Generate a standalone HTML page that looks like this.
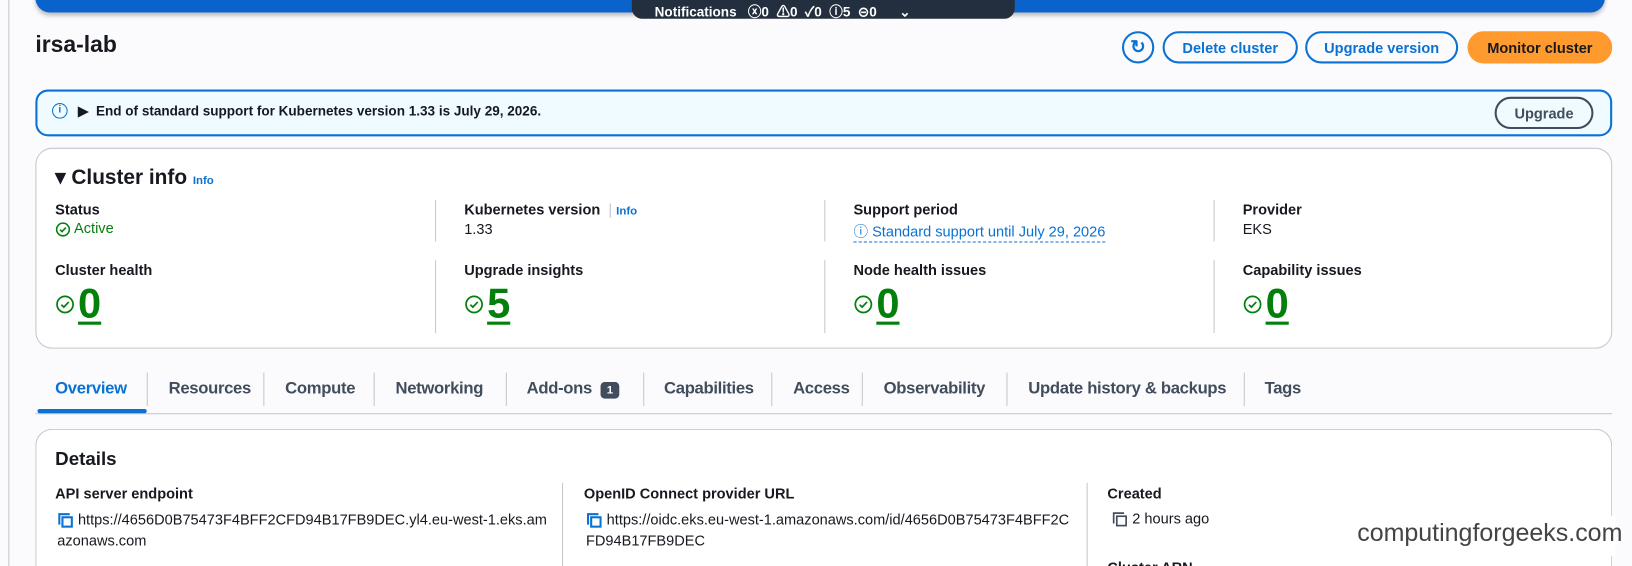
<!DOCTYPE html>
<html><head><style>
*{box-sizing:border-box;margin:0;padding:0}
html,body{width:1632px;height:566px;overflow:hidden;background:#fbfbfd}
body{font-family:"Liberation Sans",sans-serif;color:#16191f;font-size:14px;position:relative}
#w{position:absolute;left:0;top:0;width:1568px;height:544px;overflow:hidden;transform:scale(1.0408);transform-origin:0 0}
.a{position:absolute}
.b{font-weight:bold}
.btn{position:absolute;top:30px;height:31px;border:2px solid #0972d3;border-radius:16px;color:#0972d3;font-weight:bold;font-size:14px;display:flex;align-items:center;justify-content:center}
.lbl{position:absolute;font-weight:bold;font-size:14px}
.val{position:absolute;font-size:14px}
.vd{position:absolute;width:1px;background:#c6c6cd}
.tab{position:absolute;top:365px;font-size:16px;font-weight:bold;color:#414d5c;letter-spacing:-0.3px}
.tsep{position:absolute;top:358px;width:1px;height:32px;background:#c6c6cd}
.big{position:absolute;font-size:40px;font-weight:bold;color:#037f0c;text-decoration:underline;text-underline-offset:4px;text-decoration-thickness:3px}
svg{display:inline-block;vertical-align:middle}
</style></head><body><div id="w">
<div class="a" style="left:8px;top:0;width:1px;height:544px;background:#c6c6cd"></div>
<div class="a" style="left:34px;top:-10px;width:1508px;height:22px;background:#0a62cc;border-radius:0 0 14px 14px;box-shadow:0 3px 4px rgba(0,0,0,.25)"></div>
<div class="a" style="left:607px;top:-8px;width:368px;height:26px;background:#232f3e;border-radius:0 0 10px 10px;color:#fff;font-size:13px;font-weight:bold;padding:0 0 0 22px;line-height:18px;display:flex;align-items:flex-end"><span style="position:relative;top:3px">Notifications &nbsp; ⓧ0 &nbsp;⚠0 &nbsp;✓0 &nbsp;ⓘ5 &nbsp;⊝0 &nbsp;&nbsp;&nbsp;&nbsp; ⌄</span></div>
<div class="a b" style="left:34px;top:30px;font-size:22px">irsa-lab</div>
<div class="btn" style="left:1078px;width:31px;font-size:18px">↻</div>
<div class="btn" style="left:1117px;width:130px">Delete cluster</div>
<div class="btn" style="left:1254px;width:147px">Upgrade version</div>
<div class="btn" style="left:1410px;width:139px;background:#ff9a2e;border-color:#ff9a2e;color:#16191f">Monitor cluster</div>
<div class="a" style="left:34px;top:86px;width:1515px;height:45px;background:#f0fbff;border:2px solid #0972d3;border-radius:12px"></div>
<div class="a" style="left:50px;top:99px;width:15px;height:15px;border:1.5px solid #0972d3;border-radius:50%;color:#0972d3;font-size:10px;font-weight:bold;text-align:center;line-height:12px">i</div>
<div class="a b" style="left:75px;top:99px;font-size:13px;color:#16191f">▶ &nbsp;End of standard support for Kubernetes version 1.33 is July 29, 2026.</div>
<div class="a b" style="left:1436px;top:93px;width:95px;height:31px;border:2px solid #414d5c;border-radius:16px;color:#414d5c;display:flex;align-items:center;justify-content:center">Upgrade</div>
<div class="a" style="left:34px;top:142px;width:1515px;height:193px;background:#fff;border:1px solid #c6c6cd;border-radius:16px"></div>
<div class="a b" style="left:53px;top:158px;font-size:20px">▾ Cluster info <span style="font-size:11px;color:#0972d3">Info</span></div>
<div class="vd" style="left:418px;top:192px;height:40px"></div><div class="vd" style="left:792px;top:192px;height:40px"></div><div class="vd" style="left:1166px;top:192px;height:40px"></div>
<div class="vd" style="left:418px;top:250px;height:70px"></div><div class="vd" style="left:792px;top:250px;height:70px"></div><div class="vd" style="left:1166px;top:250px;height:70px"></div>
<div class="lbl" style="left:53px;top:193px">Status</div>
<div class="val" style="left:53px;top:211px;color:#037f0c"><svg width="15" height="15" viewBox="0 0 16 16"><circle cx="8" cy="8" r="6.5" fill="none" stroke="#037f0c" stroke-width="1.6"/><path d="M5 8.2l2 2 4-4.2" fill="none" stroke="#037f0c" stroke-width="1.6"/></svg> Active</div>
<div class="lbl" style="left:446px;top:193px">Kubernetes version <span style="color:#c6c6cd;font-weight:normal">&nbsp;|&nbsp;</span><span style="font-size:11px;color:#0972d3">Info</span></div>
<div class="val" style="left:446px;top:212px">1.33</div>
<div class="lbl" style="left:820px;top:193px">Support period</div>
<div class="val" style="left:820px;top:212px;color:#0972d3;border-bottom:1px dashed #0972d3">ⓘ Standard support until July 29, 2026</div>
<div class="lbl" style="left:1194px;top:193px">Provider</div>
<div class="val" style="left:1194px;top:212px">EKS</div>
<div class="lbl" style="left:53px;top:251px">Cluster health</div>
<div class="lbl" style="left:446px;top:251px">Upgrade insights</div>
<div class="lbl" style="left:820px;top:251px">Node health issues</div>
<div class="lbl" style="left:1194px;top:251px">Capability issues</div>
<div class="a" style="left:53px;top:283px"><svg width="19" height="19" viewBox="0 0 16 16"><circle cx="8" cy="8" r="6.5" fill="none" stroke="#037f0c" stroke-width="1.4"/><path d="M5 8.2l2 2 4-4.2" fill="none" stroke="#037f0c" stroke-width="1.4"/></svg></div><div class="big" style="left:75px;top:270px">0</div>
<div class="a" style="left:446px;top:283px"><svg width="19" height="19" viewBox="0 0 16 16"><circle cx="8" cy="8" r="6.5" fill="none" stroke="#037f0c" stroke-width="1.4"/><path d="M5 8.2l2 2 4-4.2" fill="none" stroke="#037f0c" stroke-width="1.4"/></svg></div><div class="big" style="left:468px;top:270px">5</div>
<div class="a" style="left:820px;top:283px"><svg width="19" height="19" viewBox="0 0 16 16"><circle cx="8" cy="8" r="6.5" fill="none" stroke="#037f0c" stroke-width="1.4"/><path d="M5 8.2l2 2 4-4.2" fill="none" stroke="#037f0c" stroke-width="1.4"/></svg></div><div class="big" style="left:842px;top:270px">0</div>
<div class="a" style="left:1194px;top:283px"><svg width="19" height="19" viewBox="0 0 16 16"><circle cx="8" cy="8" r="6.5" fill="none" stroke="#037f0c" stroke-width="1.4"/><path d="M5 8.2l2 2 4-4.2" fill="none" stroke="#037f0c" stroke-width="1.4"/></svg></div><div class="big" style="left:1216px;top:270px">0</div>
<div class="tab" style="left:53px;color:#0972d3">Overview</div>
<div class="tsep" style="left:141px"></div><div class="tab" style="left:162px">Resources</div>
<div class="tsep" style="left:253px"></div><div class="tab" style="left:274px">Compute</div>
<div class="tsep" style="left:359px"></div><div class="tab" style="left:380px">Networking</div>
<div class="tsep" style="left:486px"></div><div class="tab" style="left:506px">Add-ons <span style="display:inline-block;background:#414d5c;color:#fff;font-size:11px;padding:2px 6px;border-radius:4px;margin-left:4px">1</span></div>
<div class="tsep" style="left:618px"></div><div class="tab" style="left:638px">Capabilities</div>
<div class="tsep" style="left:741px"></div><div class="tab" style="left:762px">Access</div>
<div class="tsep" style="left:828px"></div><div class="tab" style="left:849px">Observability</div>
<div class="tsep" style="left:967px"></div><div class="tab" style="left:988px">Update history &amp; backups</div>
<div class="tsep" style="left:1195px"></div><div class="tab" style="left:1215px">Tags</div>
<div class="a" style="left:34px;top:397px;width:1515px;height:1px;background:#c6c6cd"></div>
<div class="a" style="left:36px;top:393px;width:105px;height:4px;background:#0972d3;border-radius:2px"></div>
<div class="a" style="left:34px;top:412px;width:1515px;height:132px;background:#fff;border:1px solid #c6c6cd;border-bottom:none;border-radius:16px 16px 0 0"></div>
<div class="a b" style="left:53px;top:431px;font-size:18px">Details</div>
<div class="vd" style="left:540px;top:464px;height:80px"></div><div class="vd" style="left:1044px;top:464px;height:80px"></div>
<div class="lbl" style="left:53px;top:466px">API server endpoint</div>
<div class="val" style="left:55px;top:489px;line-height:20px;width:480px"><svg width="16" height="16" viewBox="0 0 16 16"><path d="M2 12V2h10" fill="none" stroke="#0972d3" stroke-width="2"/><rect x="5" y="5" width="9" height="9" fill="none" stroke="#0972d3" stroke-width="2"/></svg> https://4656D0B75473F4BFF2CFD94B17FB9DEC.yl4.eu-west-1.eks.am<br>azonaws.com</div>
<div class="lbl" style="left:561px;top:466px">OpenID Connect provider URL</div>
<div class="val" style="left:563px;top:489px;line-height:20px;width:480px"><svg width="16" height="16" viewBox="0 0 16 16"><path d="M2 12V2h10" fill="none" stroke="#0972d3" stroke-width="2"/><rect x="5" y="5" width="9" height="9" fill="none" stroke="#0972d3" stroke-width="2"/></svg> https://oidc.eks.eu-west-1.amazonaws.com/id/4656D0B75473F4BFF2C<br>FD94B17FB9DEC</div>
<div class="lbl" style="left:1064px;top:466px">Created</div>
<div class="val" style="left:1068px;top:490px"><svg width="16" height="16" viewBox="0 0 16 16"><path d="M2 12V2h10" fill="none" stroke="#414d5c" stroke-width="1.6"/><rect x="5" y="5" width="9" height="9" fill="none" stroke="#414d5c" stroke-width="1.6"/></svg> 2 hours ago</div>
<div class="a" style="left:1064px;top:537px;width:120px;height:7px;overflow:hidden"><div class="b" style="font-size:14px;line-height:16px">Cluster ARN</div></div>
<div class="a" style="left:1296px;top:496px;width:256px;height:38px;background:#fff;color:#444;font-size:24px;padding:3px 0 0 8px">computingforgeeks.com</div>
</div></body></html>
